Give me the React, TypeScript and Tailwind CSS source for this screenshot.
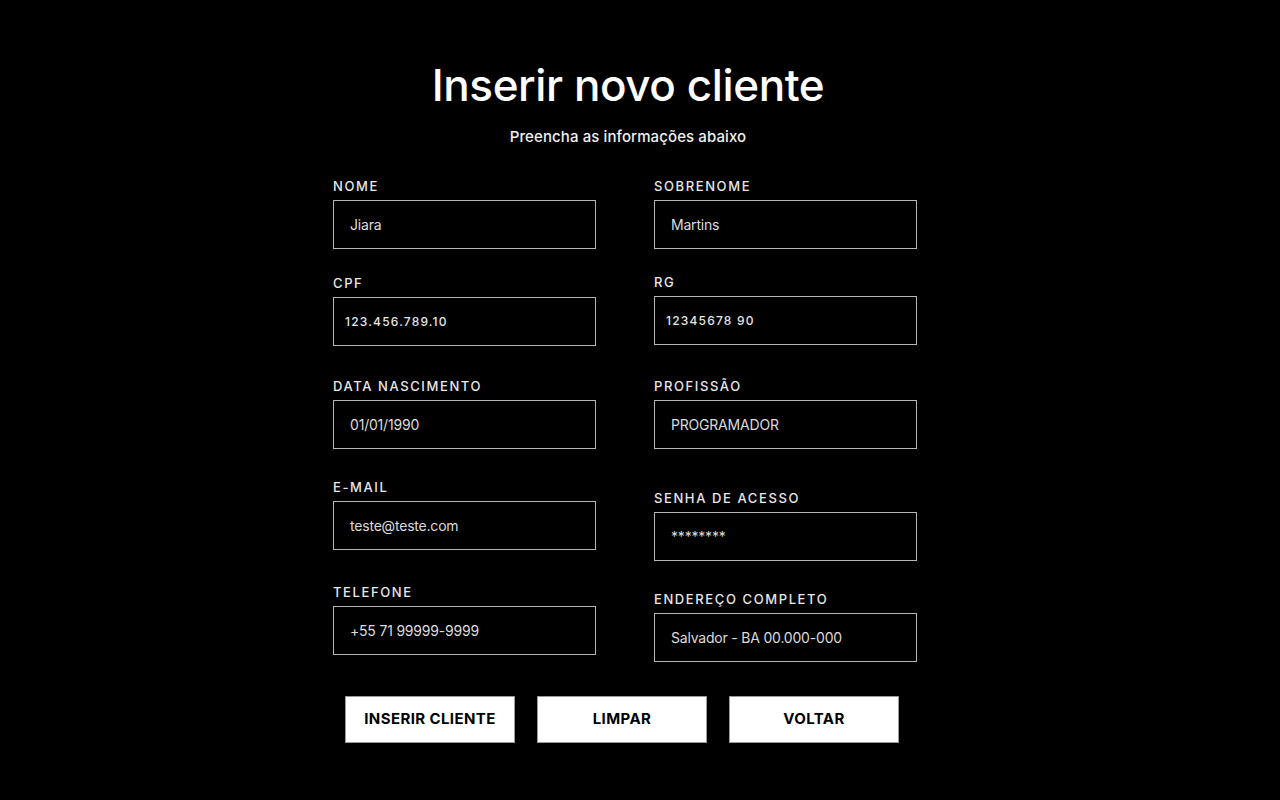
const font = { fontFamily: "Inter, 'Noto Sans', 'Liberation Sans', sans-serif" }

type Field = { label: string; value: string; mt: string; small?: boolean }

const left: Field[] = [
  { label: "NOME", value: "Jiara", mt: "mt-0" },
  { label: "CPF", value: "123.456.789.10", mt: "mt-[26px]", small: true },
  { label: "DATA NASCIMENTO", value: "01/01/1990", mt: "mt-[32px]" },
  { label: "E-MAIL", value: "teste@teste.com", mt: "mt-[30px]" },
  { label: "TELEFONE", value: "+55 71 99999-9999", mt: "mt-[34px]" },
]

const right: Field[] = [
  { label: "SOBRENOME", value: "Martins", mt: "mt-0" },
  { label: "RG", value: "12345678 90", mt: "mt-[25px]", small: true },
  { label: "PROFISSÃO", value: "PROGRAMADOR", mt: "mt-[33px]" },
  { label: "SENHA DE ACESSO", value: "********", mt: "mt-[41px]" },
  { label: "ENDEREÇO COMPLETO", value: "Salvador - BA 00.000-000", mt: "mt-[30px]" },
]

function Input({ f }: { f: Field }) {
  return (
    <div className={f.mt}>
      <div className="h-[16px] text-[13px] leading-[16px] font-medium tracking-[1.6px] text-[#e8e8e8]">{f.label}</div>
      <div className="mt-[6px] h-[49px] w-[263px] border border-[#b5b5b5] flex items-center">
        {f.small ? (
          <span className="pl-[11px] text-[12px] font-medium tracking-[1.2px] text-[#e5e5e5]">{f.value}</span>
        ) : (
          <span className="pl-[16px] text-[14px] text-[#dcdcdc] tracking-[-0.2px]">{f.value}</span>
        )}
      </div>
    </div>
  )
}

export default function App() {
  return (
    <div className="min-h-screen w-full bg-black text-white" style={font}>
      <div className="ml-[333px] w-[590px] pt-[58px]">
        <h1 className="text-center text-[44px] leading-[54px] font-medium tracking-[-0.4px] text-white">
          Inserir novo cliente
        </h1>
        <p className="mt-[15px] text-center text-[15px] leading-[20px] font-medium tracking-[0.1px] text-[#f0f0f0]">
          Preencha as informações abaixo
        </p>

        <div className="mt-[31px] flex gap-[58px]">
          <div className="flex flex-col">
            {left.map((f) => (
              <Input key={f.label} f={f} />
            ))}
          </div>
          <div className="flex flex-col">
            {right.map((f) => (
              <Input key={f.label} f={f} />
            ))}
          </div>
        </div>

        <div className="mt-[34px] ml-[12px] flex gap-[22px]">
          {["INSERIR CLIENTE", "LIMPAR", "VOLTAR"].map((b) => (
            <button
              key={b}
              className="h-[47px] w-[170px] bg-white border border-[#999] text-black text-[15px] font-bold tracking-[0.4px]"
            >
              {b}
            </button>
          ))}
        </div>
      </div>
    </div>
  )
}
